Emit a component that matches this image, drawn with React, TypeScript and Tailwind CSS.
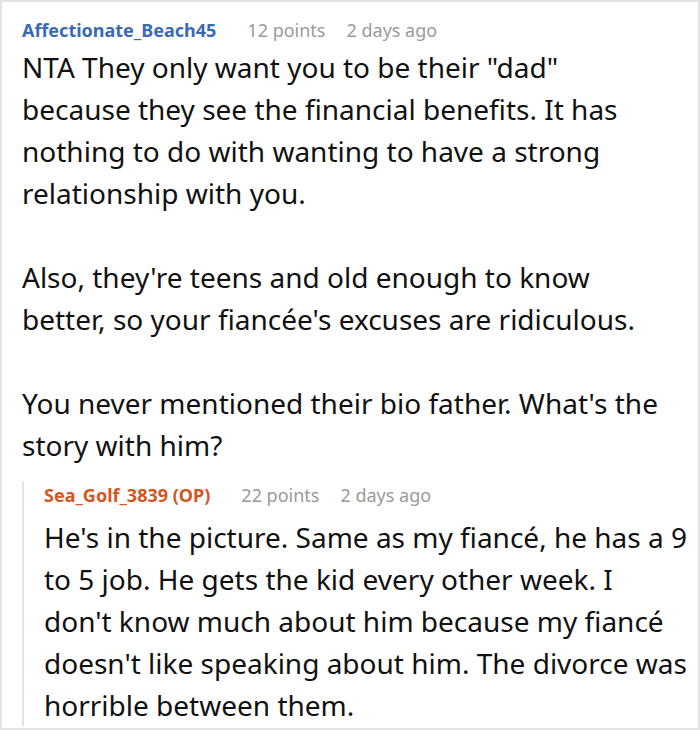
import React from "react";

const font = { fontFamily: '"Noto Sans", "Open Sans", sans-serif' };

function Lines({ lines }: { lines: string[] }) {
  return (
    <>
      {lines.map((l, i) => (
        <span key={i} className="block whitespace-nowrap">
          {l}
        </span>
      ))}
    </>
  );
}

export default function App() {
  return (
    <div className="w-[700px] h-[730px] bg-white overflow-hidden" style={font}>
      <div className="border-2 border-[#e3e3e3] h-[730px] pl-[20px] pr-[10px] pt-[14px]">
        <div className="flex items-baseline text-[18px] leading-[28px]">
          <span className="font-bold text-[#3a6ab4]">Affectionate_Beach45</span>
          <span className="ml-[31px] text-[#9a9a9a]">12 points</span>
          <span className="ml-[21px] text-[#9a9a9a]">2 days ago</span>
        </div>
        <div className="text-[28px] leading-[42px] text-[#111] mt-[2px]">
          <p>
            <Lines
              lines={[
                'NTA They only want you to be their "dad"',
                "because they see the financial benefits. It has",
                "nothing to do with wanting to have a strong",
                "relationship with you.",
              ]}
            />
          </p>
          <p className="mt-[42px]">
            <Lines
              lines={[
                "Also, they're teens and old enough to know",
                "better, so your fiancée's excuses are ridiculous.",
              ]}
            />
          </p>
          <p className="mt-[42px]">
            <Lines
              lines={[
                "You never mentioned their bio father. What's the",
                "story with him?",
              ]}
            />
          </p>
        </div>
        <div className="mt-[15px] border-l-2 border-[#e3e3e3] pl-[20px]">
          <div className="flex items-baseline text-[18px] leading-[28px]">
            <span className="font-bold text-[#d4561f]">Sea_Golf_3839 (OP)</span>
            <span className="ml-[31px] text-[#9a9a9a]">22 points</span>
            <span className="ml-[21px] text-[#9a9a9a]">2 days ago</span>
          </div>
          <div className="text-[28px] leading-[42px] text-[#111] mt-[7px]">
            <p>
              <Lines
                lines={[
                  "He's in the picture. Same as my fiancé, he has a 9",
                  "to 5 job. He gets the kid every other week. I",
                  "don't know much about him because my fiancé",
                  "doesn't like speaking about him. The divorce was",
                  "horrible between them.",
                ]}
              />
            </p>
          </div>
        </div>
      </div>
    </div>
  );
}
